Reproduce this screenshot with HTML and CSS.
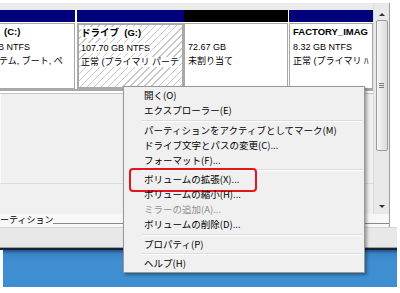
FILE: index.html
```html
<!DOCTYPE html>
<html>
<head>
	<title>ディスクの管理</title>
	<meta charset="UTF-8">
	<meta name="viewport" content="width=device-width, initial-scale=1.0">
	<link rel="stylesheet" href="styles.css">
</head>
<body>
	<div class="shot">
		<div class="window">
			<div class="win-main">
				<div class="pane">
					<div class="top-strip"></div>
					<div class="disk">
						<div class="part p1">
							<div class="bar"></div>
							<div class="cell">
								<div class="line b">(C:)</div>
								<div class="line cut1">B NTFS</div>
								<div class="line cut2">テム, ブート, ペ</div>
							</div>
						</div>
						<div class="part p2">
							<div class="bar"></div>
							<div class="cell">
								<div class="line b"><span>ドライブ&nbsp; (G:)</span></div>
								<div class="line"><span>107.70 GB NTFS</span></div>
								<div class="line"><span>正常 (プライマリ パーテ</span></div>
							</div>
						</div>
						<div class="part p3">
							<div class="bar black"></div>
							<div class="cell">
								<div class="line">&nbsp;</div>
								<div class="line">72.67 GB</div>
								<div class="line">未割り当て</div>
							</div>
						</div>
						<div class="part p4">
							<div class="bar"></div>
							<div class="cell">
								<div class="line b">FACTORY_IMAG</div>
								<div class="line">8.32 GB NTFS</div>
								<div class="line">正常 (プライマリ ﾊ</div>
							</div>
						</div>
					</div>
					<div class="rule-lines"></div>
					<div class="area1"></div>
					<div class="area2"></div>
				</div>
				<div class="vscroll">
					<div class="sb-btn up"><i></i></div>
					<div class="thumb"><i></i></div>
					<div class="track"></div>
					<div class="sb-btn down"><i></i></div>
				</div>
			</div>
			<div class="legend">
				<span class="legend-text">ーティション</span>
				<span class="legend-rule"></span>
			</div>
		</div>
		<div class="status"></div>
		<div class="dark"></div>
		<div class="desk"></div>

		<div class="menu">
			<div class="item">開く(O)</div>
			<div class="item">エクスプローラー(E)</div>
			<div class="sep"></div>
			<div class="item">パーティションをアクティブとしてマーク(M)</div>
			<div class="item">ドライブ文字とパスの変更(C)...</div>
			<div class="item">フォーマット(F)...</div>
			<div class="sep"></div>
			<div class="item marked">ボリュームの拡張(X)...</div>
			<div class="item">ボリュームの縮小(H)...</div>
			<div class="item off">ミラーの追加(A)...</div>
			<div class="item">ボリュームの削除(D)...</div>
			<div class="sep"></div>
			<div class="item">プロパティ(P)</div>
			<div class="sep"></div>
			<div class="item">ヘルプ(H)</div>
		</div>
	</div>
</body>
</html>
```

FILE: styles.css
```css
body {
	margin: 0;
	background-color: #fff;
	font-family: "Liberation Sans", "Noto Sans CJK JP", sans-serif;
	font-size: 9px;
	color: #000;
}

.shot {
	position: relative;
	width: 400px;
	height: 293px;
	padding-top: 3px;
	box-sizing: border-box;
	overflow: hidden;
}

.window {
	width: 390px;
}

.win-main {
	display: flex;
	height: 211px;
	border-right: 1px solid #9b9b9b;
}

.pane {
	width: 373px;
	overflow: hidden;
	background-color: #f0f0f0;
}

.top-strip {
	height: 7px;
	background-color: #ebebeb;
}

.disk {
	display: flex;
	height: 79px;
	background-color: #fff;
}

.part {
	display: flex;
	flex-direction: column;
}

.p1 {
	width: 75px;
	margin-right: 2px;
}

.p2 {
	width: 107px;
}

.p3 {
	width: 104px;
	margin-right: 1px;
}

.p4 {
	width: 84px;
}

.bar {
	height: 12px;
	margin-bottom: 1px;
	background-color: #00007b;
}

.bar.black {
	background-color: #000;
}

.cell {
	flex: 1;
	padding: 1px 0 0 3px;
	border: 1px solid #a8a8a8;
	background-color: #fff;
	white-space: nowrap;
	overflow: hidden;
}

.p1 .cell {
	border-left: none;
	padding-left: 4px;
}

.p2 .cell {
	padding-left: 2px;
	border: 2px solid #a9a9a9;
	background: repeating-linear-gradient(135deg, #fff 0 4px, #c6c6c6 4px 5px);
}

.p2 .line span {
	background-color: #fff;
}

.line {
	height: 14.5px;
	line-height: 14.5px;
}

.b {
	font-weight: bold;
	font-size: 9.5px;
}

.cut1 {
	margin-left: -6px;
}

.cut2 {
	margin-left: -5px;
}

.rule-lines {
	height: 2px;
	border-top: 2px solid #a8a8a8;
	border-bottom: 1px solid #c6c6c6;
	background-color: #fff;
}

.area1 {
	height: 89px;
	border-left: 1px solid #fafafa;
	border-bottom: 1px solid #dcdcdc;
}

.area2 {
	height: 30px;
	border-bottom: 1px solid #fafafa;
}

.vscroll {
	display: flex;
	flex-direction: column;
	align-items: center;
	width: 16px;
	background-color: #e9e9e9;
	border-left: 1px solid #dcdcdc;
	box-sizing: border-box;
}

.sb-btn {
	display: flex;
	justify-content: center;
	height: 17px;
	width: 100%;
	box-sizing: border-box;
}

.sb-btn.up {
	padding-top: 10px;
}

.sb-btn.up i {
	width: 0;
	height: 0;
	border-left: 3px solid transparent;
	border-right: 3px solid transparent;
	border-bottom: 3px solid #333;
}

.sb-btn.down {
	height: 15px;
	padding-top: 6px;
}

.sb-btn.down i {
	width: 0;
	height: 0;
	border-left: 3px solid transparent;
	border-right: 3px solid transparent;
	border-top: 3px solid #333;
}

.thumb {
	display: flex;
	align-items: center;
	justify-content: center;
	width: 12px;
	height: 131px;
	box-sizing: border-box;
	border: 1px solid #9d9d9d;
	border-radius: 2px;
	background: linear-gradient(90deg, #f5f5f5, #dcdcdc);
}

.thumb i {
	width: 5px;
	height: 5px;
	background: repeating-linear-gradient(#7a7a7a 0 1px, transparent 1px 2px);
}

.track {
	flex: 1;
}

.legend {
	display: flex;
	align-items: flex-start;
	height: 13px;
	background-color: #f7f7f7;
	border-right: 1px solid #9b9b9b;
}

.legend-text {
	line-height: 12px;
	font-family: "Noto Sans CJK JP", sans-serif;
	font-size: 9px;
}

.legend-rule {
	flex: 1;
	height: 9px;
	border-bottom: 1px solid #8a8a8a;
}

.status {
	width: 397px;
	height: 19px;
	background-color: #e8e8e8;
	border-top: 1px solid #d4d4d4;
	border-bottom: 1px solid #a0a0a0;
}

.dark {
	width: 397px;
	height: 2px;
	background-color: #1c2330;
}

.desk {
	width: 394px;
	height: 37px;
	margin-left: 3px;
	background: linear-gradient(#1f5189, #3a85c7 4px, #3f8fd2 12px, #3e8ed1);
}

.menu {
	position: absolute;
	left: 123px;
	top: 86px;
	width: 240px;
	padding: 1px 0;
	border: 1px solid #979797;
	background-color: #f0f0f0;
	box-shadow: 2px 2px 3px rgba(0, 0, 0, 0.35);
	font-family: "Noto Sans CJK JP", sans-serif;
	font-size: 9.5px;
}

.item {
	position: relative;
	height: 15px;
	line-height: 15px;
	padding-left: 20px;
	white-space: nowrap;
}

.item.off {
	color: #8f8f8f;
}

.item.marked::after {
	content: "";
	position: absolute;
	left: 5px;
	top: -4px;
	width: 128px;
	height: 24px;
	box-sizing: border-box;
	border: 2.5px solid #e8141b;
	border-radius: 4px;
}

.sep {
	height: 1px;
	margin: 1.5px 2px 1px 18px;
	background-color: #dcdcdc;
	border-bottom: 1px solid #fff;
}
```
